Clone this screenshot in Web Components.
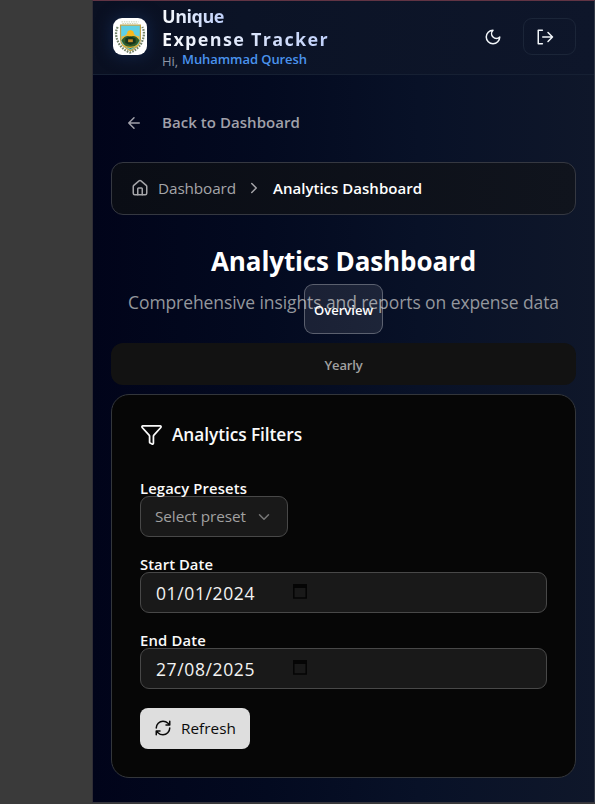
<!DOCTYPE html>
<html lang="en"><head><meta charset="utf-8"><title>Analytics Dashboard</title>
<style>
html,body{margin:0;height:804px;overflow:hidden;background:#3a3a3a;font-family:"Open Sans","Noto Sans",sans-serif;color:#fafafa}
</style></head><body>
<app-shell>
  <app-header slot="header"></app-header>
  <back-link>Back to Dashboard</back-link>
  <crumb-bar></crumb-bar>
  <page-title></page-title>
  <tab-list></tab-list>
  <filter-card></filter-card>
</app-shell>
<script>
const define=(name,html,after)=>{
  const t=document.createElement('template');t.innerHTML='<style>*{box-sizing:border-box}svg{display:block;flex:none}</style>'+html;
  customElements.define(name,class extends HTMLElement{
    connectedCallback(){if(this.shadowRoot)return;this.attachShadow({mode:'open'}).append(t.content.cloneNode(true));if(after)after(this);}
  });
};
/* A single line of text whose tracking is adjusted to fill the width in its "w" attribute. */
define('text-line','<style>:host{display:block;white-space:nowrap;width:max-content}span{display:inline-block}</style><span><slot></slot></span>',el=>{
  const s=el.shadowRoot.querySelector('span'),w=+el.getAttribute('w'),n=el.textContent.length;
  if(w)s.style.letterSpacing=((w-s.getBoundingClientRect().width)/n)+'px';
});
const icons={
 moon:'<path d="M12 3a6 6 0 0 0 9 9 9 9 0 1 1-9-9Z"/>',
 exit:'<path d="M8.5 3H3v18h5.500M9 12h13M16 6l6 6-6 6"/>',
 back:'<path d="m12 19-7-7 7-7M19 12H5"/>',
 home:'<path d="M15 21v-8a1 1 0 0 0-1-1h-4a1 1 0 0 0-1 1v8"/><path d="M3 10a2 2 0 0 1 .709-1.528l7-6a2 2 0 0 1 2.582 0l7 6A2 2 0 0 1 21 10v9a2 2 0 0 1-2 2H5a2 2 0 0 1-2-2z"/>',
 right:'<path d="m9 18 6-6-6-6"/>',
 down:'<path d="m6 9 6 6 6-6"/>',
 funnel:'<path d="M10 20a1 1 0 0 0 .553.895l2 1A1 1 0 0 0 14 21v-7a2 2 0 0 1 .517-1.341L21.740 4.670A1 1 0 0 0 21 3H3a1 1 0 0 0-.742 1.670l7.225 7.989A2 2 0 0 1 10 14z"/>',
 refresh:'<path d="M3 12a9 9 0 0 1 9-9 9.750 9.750 0 0 1 6.740 2.740L21 8M21 3v5h-5M21 12a9 9 0 0 1-9 9 9.750 9.750 0 0 1-6.740-2.740L3 16M8 16H3v5"/>'
};
const icon=(n,s,w=2)=>`<svg width="${s}" height="${s}" viewBox="0 0 24 24" fill="none" stroke="currentColor" stroke-width="${w}" stroke-linecap="round" stroke-linejoin="round">${icons[n]}</svg>`;

define('app-shell',`<style>
:host{display:block;width:503px;height:803px;margin-left:92px;border-left:1px solid #302e35;border-top:1px solid #613444;border-right:1px solid #343a47;border-bottom:1px solid #34343c;background:linear-gradient(to right,#01041a 0%,#030a20 35%,#081127 65%,#0f172a 100%);box-sizing:border-box}
main{padding:0 18px}
</style><slot name="header"></slot><main><slot></slot></main>`);

define('crest-logo',`<style>:host{display:block;width:34px;height:37px;border-radius:9px;background:#fff;box-shadow:0 0 14px 3px #10203f}</style>
<svg width="34" height="37" viewBox="0 0 36 38">
<path d="M9 3.500h18M10 5.300h16" stroke="#c4caac" stroke-width="1" stroke-dasharray="1.500 1"/>
<path d="M5 9Q1 16 6 26Q10 33 18 36Q26 33 30 26Q35 16 31 9" fill="none" stroke="#74846a" stroke-width="2.400" stroke-dasharray="1.800 1.200"/>
<path d="M8 7h21v15q0 7-10.500 12Q8 29 8 22Z" fill="#5fcfe4" stroke="#bfa34a" stroke-width="1.300"/>
<path d="M9 19l4-1 5.500-6 5.500 6 4 1v4H9Z" fill="#e9b841"/><circle cx="18.500" cy="16" r="3.500" fill="#f7b91d"/>
<path d="M9 23q4-6 9.500-4 5.500-2 9.500 4-2 6-9.500 9Q11 29 9 23Z" fill="#315b28"/>
<path d="M13 21l5.500-2 5.500 2v5l-5.500 2-5.500-2Z" fill="#17341d"/><path d="M16 22h5v3h-5Z" fill="#c78b27"/>
<path d="M10 28q8 5 17 0" fill="none" stroke="#e1b238" stroke-width="1.500"/></svg>`);

define('app-header',`<style>
:host{display:flex;height:74px;box-sizing:border-box;border-bottom:1px solid #162033;background:linear-gradient(to right,#0a1022,#0b1326 30%,#0e162a);padding:0 18px 0 20px;align-items:flex-start}
crest-logo{margin-top:17px}.brand{margin:4px 0 0 15px;font-weight:600;font-size:18px;line-height:23px}
.brand>text-line{color:transparent;background:linear-gradient(to right,#f8fafc,#bfd0fa);background-clip:text;-webkit-background-clip:text;font-weight:700}
.hi{display:flex;gap:4px;font-size:13px;line-height:17px;align-items:flex-start;color:#8e97a7;font-weight:400}
.hi text-line:last-child{color:#4a93ee;font-weight:600}.hi text-line:first-child{margin-top:2px}
.acts{margin:17px 0 0 auto;display:flex;align-items:center;gap:21px;color:#f1f5f9}
.out{width:53px;height:37px;border:1px solid #1b2538;border-radius:9px;display:flex;align-items:center;padding-left:12px}
</style><crest-logo></crest-logo>
<div class="brand"><text-line w="62">Unique</text-line><text-line w="167">Expense Tracker</text-line>
<div class="hi"><text-line w="16">Hi,</text-line><text-line w="125">Muhammad Quresh</text-line></div></div>
<div class="acts">${icon('moon',18)}<div class="out">${icon('exit',18)}</div></div>`);

define('back-link',`<style>:host{display:flex;align-items:center;gap:19px;height:40px;margin:28px 0 0 14px;font-weight:600;font-size:15px;color:#a1a1aa}text-line{margin-top:-2px}</style>${icon('back',18)}<text-line w="138">Back to Dashboard</text-line>`);

define('crumb-bar',`<style>:host{display:flex;align-items:center;height:53px;box-sizing:border-box;margin-top:19px;border:1px solid #353841;border-radius:12px;background:linear-gradient(to right,#0a0d15,#10141d);padding:0 0 2px 19px;color:#a5a5a9;font-size:15.300px}
.d{margin:0 9px 0 9px}.a{margin-left:10px;color:#fff;font-weight:600;font-size:15px}</style>
${icon('home',18)}<text-line class="d" w="78">Dashboard</text-line>${icon('right',18)}<text-line class="a" w="149">Analytics Dashboard</text-line>`);

define('page-title',`<style>:host{display:flex;flex-direction:column;align-items:center;margin-top:27px;height:101px}
.h{font-size:26px;font-weight:700;line-height:38px;color:#fff}.s{font-size:17.500px;line-height:28px;margin-top:8px;color:#94979d}</style>
<text-line class="h" w="265">Analytics Dashboard</text-line><text-line class="s" w="431">Comprehensive insights and reports on expense data</text-line>`);

define('tab-list',`<style>:host{display:flex;position:relative;height:42px;border-radius:12px;background:#121212;justify-content:center;align-items:center;font-size:13px;font-weight:600;color:#a1a1a1;padding-top:2px;box-sizing:border-box}
.over{position:absolute;left:193px;top:-59px;width:79px;height:50px;border:1px solid #ffffff48;border-radius:9px;background:#ffffff17;color:#fff;display:flex;align-items:center;justify-content:center;padding-top:1px}</style>
<text-line w="38">Yearly</text-line><div class="over"><text-line w="59">Overview</text-line></div>`);

define('date-input',`<style>:host{display:flex;height:41px;border:1px solid #484848;border-radius:9px;background:#191919;box-sizing:border-box;padding:0 15px;align-items:center;font-size:17.500px;font-weight:400;color:#f3f3f3}
svg{margin:-3px 0 0 37px}</style><text-line w="99"><slot></slot></text-line>
<svg width="16" height="17" viewBox="0 0 16 17"><path d="M1 1h14v4H1Z" fill="#050505"/><path d="M1.800 4v11h12.400V4" fill="none" stroke="#050505" stroke-width="1.500"/></svg>`,
el=>{const t=el.shadowRoot.querySelector('text-line');t.shadowRoot.querySelector('span').style.letterSpacing=((99-t.getBoundingClientRect().width)/10)+'px';});

define('filter-card',`<style>:host{display:block;height:384px;box-sizing:border-box;margin-top:9px;border:1px solid #33363b;border-radius:18px;background:#060606;padding:26px 28px}
.head{display:flex;align-items:center;gap:9px;height:26px;font-size:17.300px;font-weight:600;color:#fafafa}
label{display:block;font-size:14.800px;font-weight:600;line-height:18px;height:17px}
.one{margin-top:32px}.next{margin-top:18px}
.sel{width:148px;height:41px;border:1px solid #484848;border-radius:9px;background:#191919;display:flex;align-items:center;gap:9px;padding-left:14px;font-size:15.300px;color:#a1a1a1}
.sel svg{color:#777}.sel text-line{margin-top:-2px}
button{display:flex;align-items:center;gap:9px;width:110px;height:41px;border:0;border-radius:8px;background:#dedede;color:#0a0a0a;padding:0 14px;margin-top:19px;font:500 15.300px "Open Sans","Noto Sans",sans-serif}button text-line{margin-top:-2px}button svg{margin-top:-1px}</style>
<div class="head">${icon('funnel',23,1.8)}<text-line w="130">Analytics Filters</text-line></div>
<label class="one"><text-line w="107">Legacy Presets</text-line></label>
<div class="sel"><text-line w="91">Select preset</text-line>${icon('down',18)}</div>
<label class="next"><text-line w="73">Start Date</text-line></label><date-input>01/01/2024</date-input>
<label class="next"><text-line w="66">End Date</text-line></label><date-input>27/08/2025</date-input>
<button>${icon('refresh',18)}<text-line w="55">Refresh</text-line></button>`);
</script></body></html>
